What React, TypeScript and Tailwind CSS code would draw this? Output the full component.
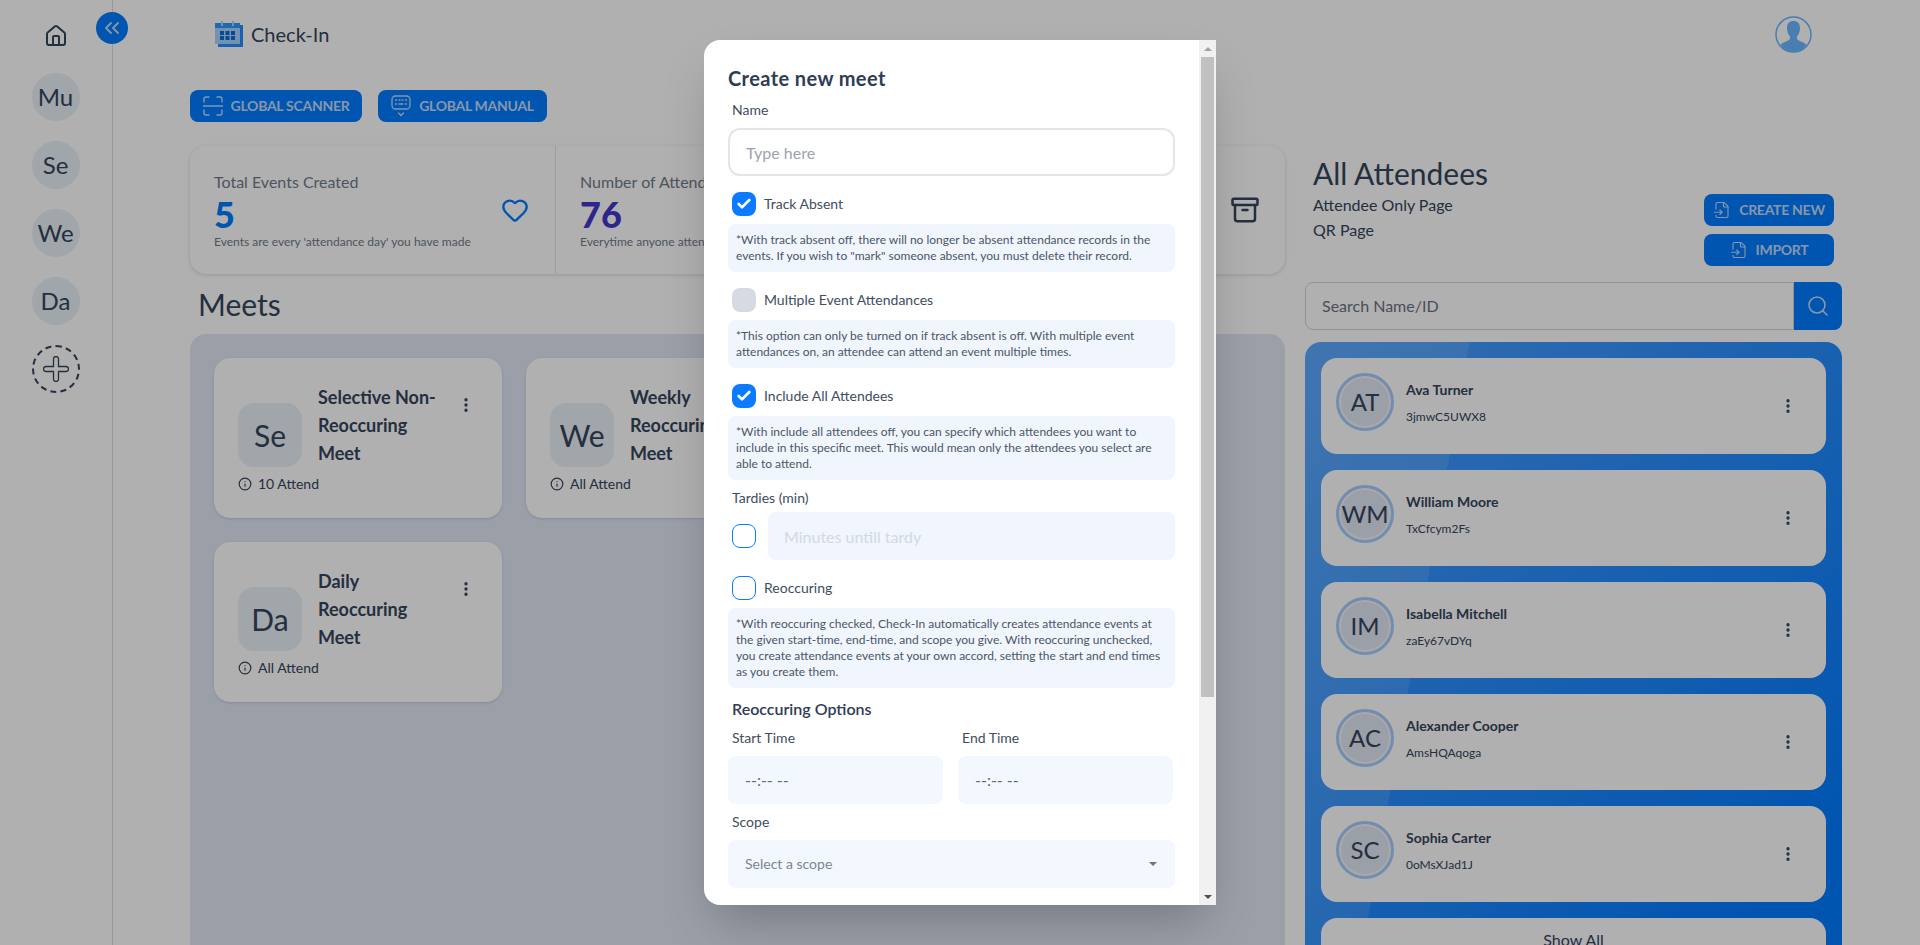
import React from "react";
import {
  Archive,
  Check,
  ChevronsLeft,
  EllipsisVertical,
  FileInput,
  Heart,
  House,
  Info,
  Search,
} from "lucide-react";

const SIDE_ITEMS = ["Mu", "Se", "We", "Da"];

const ATTENDEES = [
  { short: "AT", name: "Ava Turner", id: "3jmwC5UWX8" },
  { short: "WM", name: "William Moore", id: "TxCfcym2Fs" },
  { short: "IM", name: "Isabella Mitchell", id: "zaEy67vDYq" },
  { short: "AC", name: "Alexander Cooper", id: "AmsHQAqoga" },
  { short: "SC", name: "Sophia Carter", id: "0oMsXJad1J" },
];

const LogoIcon = () => (
  <svg width="28" height="26" viewBox="0 0 28 26">
    <rect x="3" y="4" width="25" height="22" fill="#1e8fff" />
    <rect x="0" y="2" width="25" height="21" fill="#a8d4ff" />
    <rect x="0" y="2" width="25" height="5" fill="#2f98ff" />
    <rect x="6" y="0" width="2" height="5" fill="#9fe0ff" />
    <rect x="17" y="0" width="2" height="5" fill="#9fe0ff" />
    {[5, 10.5, 16].map((x) =>
      [10, 15].map((y) => (
        <rect key={`${x}-${y}`} x={x} y={y} width="4" height="4" fill="#0a6fd8" />
      ))
    )}
  </svg>
);

const ScannerIcon = () => (
  <svg width="20" height="20" viewBox="0 0 20 20" fill="none" stroke="currentColor" strokeWidth="1.4" strokeLinecap="round">
    <path d="M1 6V3a2 2 0 0 1 2-2h3M14 1h3a2 2 0 0 1 2 2v3M1 14v3a2 2 0 0 0 2 2h3M14 19h3a2 2 0 0 0 2-2v-3M0 10h20" />
  </svg>
);

const KeyboardIcon = () => (
  <svg width="20" height="22" viewBox="0 0 20 22" fill="none" stroke="currentColor" strokeWidth="1.3" strokeLinecap="round">
    <rect x="1" y="1" width="18" height="13" rx="3.5" />
    <path d="M4.5 5h1M8 5h1M11 5h1M14.5 5h1M4.5 9h1M8 9h4M14.5 9h1M7.5 18l2.5 2.5 2.5-2.5" />
  </svg>
);

const ProfileIcon = () => (
  <svg width="37" height="37" viewBox="0 0 37 37">
    <circle cx="18.5" cy="18.5" r="17.5" fill="none" stroke="#6bb8ff" strokeWidth="1.5" />
    <path
      d="M18.5 5c4 0 6.500 2.500 6.500 7 0 4-1.500 7-3 8.500v2.500c1 1.500 6 3 9.500 5.500A17 17 0 0 1 18.500 36 17 17 0 0 1 5.500 28.500C9 26 14 24.500 15 23v-2.500c-1.500-1.500-3-4.500-3-8.500 0-4.500 2.500-7 6.500-7z"
      fill="#6bb8ff"
    />
  </svg>
);

const PlusIcon = () => (
  <svg width="26" height="26" viewBox="0 0 26 26" fill="none" stroke="#35445c" strokeWidth="1.3">
    <path d="M10.500 3a2.500 2.500 0 0 1 5 0v7.500H23a2.500 2.500 0 0 1 0 5h-7.500V23a2.500 2.500 0 0 1-5 0v-7.500H3a2.500 2.500 0 0 1 0-5h7.500z" />
  </svg>
);

const BlueButton = ({ width, icon, label }: { width: string; icon: React.ReactNode; label: string }) => (
  <button className={`${width} flex h-8 items-center justify-center gap-[8px] rounded-lg bg-[#007bff] text-sm font-bold tracking-[-0.02em] text-[#c4daf8]`}>
    {icon}
    {label}
  </button>
);

const MeetCard = ({
  short,
  title,
  attend,
  className = "",
}: {
  short: string;
  title: string;
  attend: string;
  className?: string;
}) => (
  <div className={`flex h-40 w-72 flex-col rounded-2xl bg-white px-6 pt-[25px] shadow-sm ${className}`}>
    <div className="flex items-end gap-4">
      <div className="flex h-16 w-16 shrink-0 items-center justify-center rounded-2xl bg-[#e9f1f7] text-3xl">
        {short}
      </div>
      <div className="w-[129px] shrink-0 text-lg leading-7 font-bold">{title}</div>
      <EllipsisVertical className="mb-[53px] ml-[-6px] shrink-0" size={18} strokeWidth={2.4} />
    </div>
    <div className="mt-[7px] flex items-center gap-[6px] text-sm leading-5">
      <Info size={14} strokeWidth={2} />
      {attend}
    </div>
  </div>
);

const StatItem = ({
  title,
  value,
  valueColor,
  desc,
  icon,
  divider,
}: {
  title?: string;
  value?: string;
  valueColor?: string;
  desc?: string;
  icon?: React.ReactNode;
  divider?: boolean;
}) => (
  <div className={`flex w-[365px] shrink-0 items-center justify-between pr-[26px] pl-6 ${divider ? "border-r border-[#e2e5ea]" : ""}`}>
    <div className="flex flex-col whitespace-nowrap">
      <div className="text-base leading-6 text-[#717a88]">{title}</div>
      <div className={`mt-[2px] text-4xl leading-9 font-black ${valueColor}`}>{value}</div>
      <div className="mt-[2px] text-xs leading-4 text-[#717a88]">{desc}</div>
    </div>
    {icon}
  </div>
);

const Box = ({ checked, disabled }: { checked?: boolean; disabled?: boolean }) => {
  if (disabled) return <div className="h-6 w-6 shrink-0 rounded-lg bg-[#d5dae3]" />;
  if (checked)
    return (
      <div className="flex h-6 w-6 shrink-0 items-center justify-center rounded-lg bg-[#0d7bff]">
        <Check size={16} strokeWidth={4} className="text-white" />
      </div>
    );
  return <div className="h-6 w-6 shrink-0 rounded-lg border border-[#0d7bff] bg-white" />;
};

const CheckRow = ({ label, checked, disabled }: { label: string; checked?: boolean; disabled?: boolean }) => (
  <div className="flex h-6 items-center gap-2 pl-1 text-sm text-[#414d60]">
    <Box checked={checked} disabled={disabled} />
    {label}
  </div>
);

const Note = ({ children }: { children: React.ReactNode }) => (
  <p className="mt-2 rounded-lg bg-[#f1f5fd] px-2 py-2 text-xs leading-4 text-[#4a5568]">{children}</p>
);

const Label = ({ children }: { children: React.ReactNode }) => (
  <div className="pl-1 text-sm leading-5 text-[#414d60]">{children}</div>
);

const CreateMeetModal = () => (
  <div className="flex h-[865px] w-[512px] overflow-hidden rounded-l-2xl bg-white text-[#2f3c56] shadow-2xl">
    <div className="flex-1 overflow-hidden px-6 pt-6">
      <h2 className="text-xl leading-7 font-bold tracking-[0.4px]">Create new meet</h2>
      <div className="mt-2">
        <Label>Name</Label>
      </div>
      <input
        placeholder="Type here"
        className="mt-2 h-12 w-full rounded-xl border-2 border-[#e2e5ea] px-4 text-base placeholder:text-[#9ca3af]"
      />
      <div className="mt-4">
        <CheckRow label="Track Absent" checked />
      </div>
      <Note>
        *With track absent off, there will no longer be absent attendance records in the events. If you wish to
        "mark" someone absent, you must delete their record.
      </Note>
      <div className="mt-4">
        <CheckRow label="Multiple Event Attendances" disabled />
      </div>
      <Note>
        *This option can only be turned on if track absent is off. With multiple event attendances on, an attendee
        can attend an event multiple times.
      </Note>
      <div className="mt-4">
        <CheckRow label="Include All Attendees" checked />
      </div>
      <Note>
        *With include all attendees off, you can specify which attendees you want to include in this specific meet.
        This would mean only the attendees you select are able to attend.
      </Note>
      <div className="mt-2">
        <Label>Tardies (min)</Label>
      </div>
      <div className="mt-[4px] flex items-center gap-3 pl-1">
        <Box />
        <input
          disabled
          placeholder="Minutes untill tardy"
          className="h-12 min-w-0 flex-1 rounded-lg bg-[#f1f5fd] px-4 text-base placeholder:text-[#d3d9e4]"
        />
      </div>
      <div className="mt-4">
        <CheckRow label="Reoccuring" />
      </div>
      <Note>
        *With reoccuring checked, Check-In automatically creates attendance events at the given start-time,
        end-time, and scope you give. With reoccuring unchecked, you create attendance events at your own accord,
        setting the start and end times as you create them.
      </Note>
      <div className="mt-[9px] pl-1 text-base leading-6 font-semibold">Reoccuring Options</div>
      <div className="mt-[7px] grid grid-cols-[215px_215px] gap-x-[15px]">
        <div>
          <Label>Start Time</Label>
          <div className="mt-2 flex h-12 items-center rounded-lg bg-[#f3f7fe] pl-[17px] text-base text-[#5d6a7e]">--:-- --</div>
        </div>
        <div>
          <Label>End Time</Label>
          <div className="mt-2 flex h-12 items-center rounded-lg bg-[#f3f7fe] pl-[17px] text-base text-[#5d6a7e]">--:-- --</div>
        </div>
      </div>
      <div className="mt-2">
        <Label>Scope</Label>
      </div>
      <div className="mt-2 flex h-12 items-center justify-between rounded-lg bg-[#f3f7fe] pr-[18px] pl-[17px] text-sm text-[#7b8494]">
        Select a scope
        <span className="h-0 w-0 border-x-[4px] border-t-[4px] border-x-transparent border-t-[#6b7280]" />
      </div>
    </div>
    {/* scrollbar */}
    <div className="flex w-[17px] shrink-0 flex-col items-center bg-[#f1f1f1]">
      <div className="flex h-[17px] items-center justify-center">
        <span className="h-0 w-0 border-x-[4px] border-b-[4px] border-x-transparent border-b-[#a3a3a3]" />
      </div>
      <div className="h-[640px] w-[13px] bg-[#c1c1c1]" />
      <div className="flex-1" />
      <div className="flex h-[17px] items-center justify-center">
        <span className="h-0 w-0 border-x-[4px] border-t-[4px] border-x-transparent border-t-[#505050]" />
      </div>
    </div>
  </div>
);

export default function App() {
  return (
    <div className="relative flex h-screen overflow-hidden bg-white font-[Lato,sans-serif] text-[#35445c]">
      {/* side rail */}
      <aside className="relative flex w-[113px] shrink-0 flex-col items-center border-r border-[#dcdcdc] pt-6 pr-[1px]">
        <House size={24} strokeWidth={2} />
        <button className="absolute top-3 left-24 flex h-8 w-8 items-center justify-center rounded-full bg-[#007bff] text-[#c4daf8]">
          <ChevronsLeft size={24} strokeWidth={1.8} />
        </button>
        <div className="mt-[25px] flex flex-col gap-5">
          {SIDE_ITEMS.map((item) => (
            <div key={item} className="flex h-12 w-12 items-center justify-center rounded-full bg-[#e9f1f7] text-2xl">
              {item}
            </div>
          ))}
          <div className="flex h-12 w-12 items-center justify-center rounded-full border-2 border-dashed border-[#35445c]">
            <PlusIcon />
          </div>
        </div>
      </aside>

      <main className="flex min-w-0 flex-1 flex-col pr-[78px] pl-[77px]">
        <header className="flex h-[68px] shrink-0 items-center pr-[30px] pl-[25px]">
          <LogoIcon />
          <span className="ml-2 text-xl">Check-In</span>
          <div className="ml-auto">
            <ProfileIcon />
          </div>
        </header>

        <div className="mt-[22px] flex shrink-0 gap-4">
          <BlueButton width="w-[172px]" icon={<ScannerIcon />} label="GLOBAL SCANNER" />
          <BlueButton width="w-[169px]" icon={<KeyboardIcon />} label="GLOBAL MANUAL" />
        </div>

        <div className="mt-6 grid min-h-0 flex-1 grid-cols-[1095px_537px] gap-x-5">
          <section className="flex min-h-0 flex-col">
            <div className="flex h-32 shrink-0 rounded-2xl bg-white shadow-[0_1px_4px_rgba(0,0,0,0.15)]">
              <div className="flex w-[366px] shrink-0 border-r border-[#e2e5ea]">
                <StatItem
                  title="Total Events Created"
                  value="5"
                  valueColor="text-[#007bff]"
                  desc="Events are every 'attendance day' you have made"
                  icon={<Heart size={28} strokeWidth={2} className="text-[#007bff]" />}
                />
              </div>
              <StatItem
                title="Number of Attendances"
                value="76"
                valueColor="text-[#4338ca]"
                desc="Everytime anyone attended an event"
                divider
              />
              <StatItem icon={<Archive size={30} strokeWidth={2} />} />
            </div>
            <h2 className="flex h-[60px] shrink-0 items-center pl-2 text-3xl">Meets</h2>
            <div className="grid flex-1 auto-rows-min grid-cols-[repeat(3,288px)] gap-6 rounded-t-2xl bg-[#e0e6f4] p-6">
              <MeetCard short="Se" title="Selective Non-Reoccuring Meet" attend="10 Attend" />
              <MeetCard short="We" title="Weekly Reoccuring Meet" attend="All Attend" />
              <MeetCard short="Da" title="Daily Reoccuring Meet" attend="All Attend" className="col-start-1" />
            </div>
          </section>

          <section className="flex min-h-0 flex-col">
            <div className="flex h-[136px] shrink-0 items-start justify-between pr-[8px] pl-2">
              <div className="pt-[7px]">
                <h2 className="text-3xl leading-10">All Attendees</h2>
                <div className="text-base leading-6">Attendee Only Page</div>
                <div className="mt-[1px] text-base leading-6">QR Page</div>
              </div>
              <div className="mt-12 flex flex-col gap-2">
                <BlueButton width="w-[130px]" icon={<FileInput size={18} strokeWidth={1.5} />} label="CREATE NEW" />
                <BlueButton width="w-[130px]" icon={<FileInput size={18} strokeWidth={1.5} />} label="IMPORT" />
              </div>
            </div>
            <div className="flex h-12 shrink-0">
              <input
                placeholder="Search Name/ID"
                className="min-w-0 flex-1 rounded-l-lg border border-[#d4d4d4] bg-white px-4 text-base placeholder:text-[#6b7280]"
              />
              <button className="flex w-12 items-center justify-center rounded-r-lg bg-[#007bff] text-[#c4daf8]">
                <Search size={24} strokeWidth={1.6} />
              </button>
            </div>
            <div className="mt-3 flex flex-1 flex-col gap-4 rounded-t-2xl bg-[#007bff] bg-[linear-gradient(100deg,rgba(255,255,255,0.1)_0_25%,transparent_25%),linear-gradient(135deg,#4da0ff,#007bff_85%)] p-4">
              {ATTENDEES.map((person) => (
                <div key={person.id} className="flex h-24 shrink-0 items-start rounded-2xl bg-white pt-[15px] pr-[29px] pl-[15px]">
                  <div className="flex h-[58px] w-[58px] shrink-0 items-center justify-center rounded-full border-[3px] border-[#a6cdff] bg-[#e0e6f4] text-2xl shadow-[inset_0_0_0_2px_#f5f5f5]">
                    {person.short}
                  </div>
                  <div className="ml-3 flex flex-col">
                    <div className="mt-[7px] text-sm leading-5 font-bold">{person.name}</div>
                    <div className="mt-[7px] text-xs leading-5">{person.id}</div>
                  </div>
                  <EllipsisVertical className="mt-[24px] ml-auto" size={18} strokeWidth={2.4} />
                </div>
              ))}
              <div className="h-24 shrink-0 rounded-2xl bg-white pt-[10px] text-center text-base leading-6">Show All</div>
            </div>
          </section>
        </div>
      </main>

      {/* modal backdrop */}
      <div className="absolute inset-0 flex items-center justify-center bg-black/[0.31]">
        <CreateMeetModal />
      </div>
    </div>
  );
}
